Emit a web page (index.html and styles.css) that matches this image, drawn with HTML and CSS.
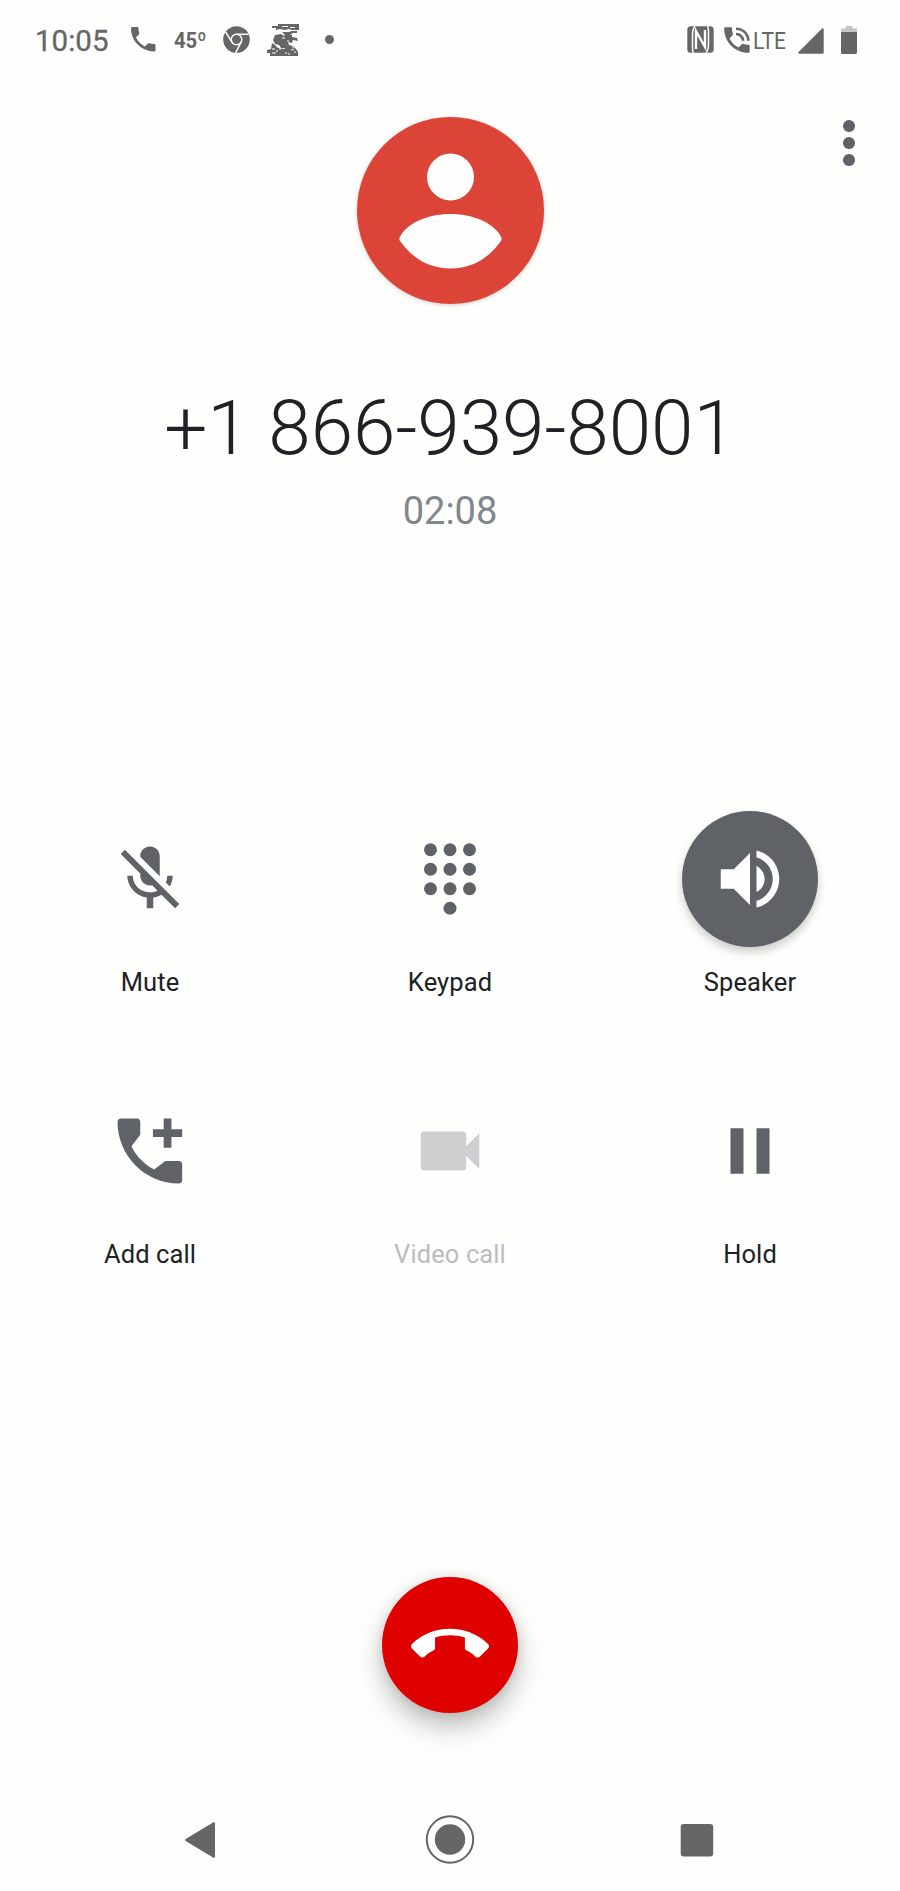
FILE: index.html
```html
<!DOCTYPE html>
<html lang="en">
<head>
<meta charset="UTF-8">
<title>Call</title>
<link rel="stylesheet" href="styles.css">
</head>
<body>
	<div class="phone">
		<header class="status">
			<span class="clock">10:05</span>
			<svg class="st-call" viewBox="3 3 18 18"><path d="M4 3h3.500c.55 0 1 .45 1 1 0 1.250.2 2.450.57 3.570.11.35.03.74-.25 1.020l-2.200 2.200c1.440 2.830 3.760 5.140 6.590 6.590l2.200-2.200c.28-.28.67-.36 1.020-.25 1.120.37 2.320.57 3.570.57.55 0 1 .45 1 1V20c0 .55-.45 1-1 1C10.610 21 3 13.390 3 4c0-.55.45-1 1-1z"/></svg>
			<svg class="temp" viewBox="0 0 36 26"><text x="1" y="20.500" textLength="32.500" lengthAdjust="spacingAndGlyphs">45º</text></svg>
			<svg class="st-chrome" viewBox="0 0 27 27">
				<circle cx="13.500" cy="13.500" r="13.300"/>
				<g class="cut"><circle cx="13.500" cy="13.500" r="5.300"/><path d="M13.500 8.200H25.500M8.900 16.200L2.600 6M18.100 16.200L12.500 27"/></g>
			</svg>
			<svg class="st-picture" viewBox="0 0 32 32">
				<path d="M11 0h21v6h-7l-3-1-4 1-5-1-4 1V4H5V2h6zM15 8h7l3-1h5v2h-4l-3 2h-5zM8 11l6-1 3 2 2-2 2 1h4v2l5 1 1 3-5-1-1 3-4-1 1 3-3 3h-5l-2-3-4-1-2-4zM5 19l3 2 3 3 6 1 3-2 2-2 4 1 3 3 2 3v4H3v-3H0v-3l4-1z"/>
				<path class="speck" d="M5 25h3M9 27h2M12 25h2M15 14h3M24 26l3-1M27 28h2M15 2.500h6M23 3.500h5M20 17h2M5 29h4M21 30h2M18 29h2M25 23h2"/>
			</svg>
			<span class="dot"></span>
			<svg class="st-nfc" viewBox="0 0 27 27">
				<rect x=".3" y=".3" width="26.400" height="26.400" rx="3.500"/>
				<path class="cut" d="M8 0C5.500 3 5.500 6 5.500 9V22q0 3 1 5M19 27c2.500-3 2.500-6 2.500-9V5q0-3-1-5"/>
				<path class="cut wide" d="M9 23V5L18 21V4"/>
			</svg>
			<svg class="st-wifi-call" viewBox="0 0 26 26">
				<path d="M1.500.3h5.200c.8 0 1.300.5 1.300 1.200 0 2 .3 3.700.9 5.200.2.600.1 1-.3 1.500L5.500 11.500c2.100 4 5 6.900 9 9l3.200-3.200c.4-.4.9-.5 1.500-.3 1.600.5 3.200.8 5 .8.900 0 1.500.5 1.500 1.400v5c0 .9-.5 1.500-1.500 1.500C11 25.700.2 15 .2 1.700c0-.9.5-1.400 1.300-1.400z"/>
				<path class="wave" d="M12 1.700c7 0 12.300 5.300 12.300 12M12 7c4.200 0 7 3 7 6.700"/>
			</svg>
			<svg class="lte" viewBox="0 0 40 34"><text x="3" y="25.500" textLength="33" lengthAdjust="spacingAndGlyphs">LTE</text></svg>
			<svg class="st-signal" viewBox="0 0 26 26"><path d="M24 .6c.8-.8 1.700-.4 1.700.700V24.500c0 .8-.5 1.200-1.200 1.200H1.300c-1.200 0-1.500-1-.7-1.700z"/></svg>
			<svg class="st-battery" viewBox="0 0 16 28"><path class="empty" d="M4.500 0h7v2.500H16V7H0V2.500h4.500z"/><path d="M0 6h16v20.500c0 .9-.6 1.500-1.500 1.500h-13C.6 28 0 27.400 0 26.500z"/></svg>
		</header>

		<div class="menu-row">
			<button class="menu" aria-label="More options"><i></i><i></i><i></i></button>
		</div>

		<section class="caller">
			<div class="avatar">
				<svg viewBox="0 0 187 187"><circle cx="93.500" cy="60" r="23.500"/><path d="M93.500 97C118 97 138 107 144.300 120.500q.8 1.800-.2 3.300C132 141 115 151.500 93.500 151.500S55 141 42.900 123.800q-1-1.500-.2-3.300C49 107 69 97 93.500 97z"/></svg>
			</div>
			<h1 class="number">+1 866-939-8001</h1>
			<p class="time">02:08</p>
		</section>

		<section class="actions">
			<button class="action">
				<span class="icon"><svg viewBox="0 0 24 24"><path d="M19 11h-1.700c0 .74-.16 1.430-.43 2.050l1.230 1.230c.56-.98.9-2.090.9-3.280zm-4.020.17c0-.06.020-.11.020-.17V5c0-1.660-1.340-3-3-3S9 3.340 9 5v.18l5.980 5.990zM4.270 3L3 4.270l6.010 6.010V11c0 1.660 1.330 3 2.990 3 .22 0 .44-.03.65-.08l1.660 1.660c-.71.33-1.500.52-2.310.52-2.760 0-5.300-2.100-5.300-5.100H5c0 3.410 2.720 6.230 6 6.720V21h2v-3.280c.91-.13 1.770-.45 2.540-.9L19.730 21 21 19.730 4.270 3z"/></svg></span>
				<span class="label">Mute</span>
			</button>
			<button class="action">
				<span class="icon"><svg viewBox="0 0 24 24"><circle cx="6" cy="3" r="2"/><circle cx="12" cy="3" r="2"/><circle cx="18" cy="3" r="2"/><circle cx="6" cy="9" r="2"/><circle cx="12" cy="9" r="2"/><circle cx="18" cy="9" r="2"/><circle cx="6" cy="15" r="2"/><circle cx="12" cy="15" r="2"/><circle cx="18" cy="15" r="2"/><circle cx="12" cy="21" r="2"/></svg></span>
				<span class="label">Keypad</span>
			</button>
			<button class="action active">
				<span class="icon"><svg viewBox="0 0 24 24"><path d="M3 9v6h4l5 5V4L7 9H3zm13.500 3c0-1.770-1.020-3.290-2.500-4.030v8.050c1.480-.73 2.500-2.250 2.500-4.020zM14 3.230v2.060c2.890.86 5 3.540 5 6.710s-2.110 5.850-5 6.710v2.060c4.010-.91 7-4.490 7-8.770s-2.990-7.860-7-8.770z"/></svg></span>
				<span class="label">Speaker</span>
			</button>
			<button class="action">
				<span class="icon"><svg viewBox="0 0 24 24"><path d="M3 2h5c.6 0 1 .4 1 1v4L6.300 10.500c1.500 3.100 3.900 5.600 7 7.200L16.700 15.100H20.900c.6 0 1 .4 1 1v4.900c0 .6-.4 1-1 1C10.500 22 2 13.500 2 3c0-.6.4-1 1-1zM16.200 2h2.400v3.300h3.300v2.400h-3.300V11h-2.400V7.700h-3.300V5.300h3.300z"/></svg></span>
				<span class="label">Add call</span>
			</button>
			<button class="action disabled">
				<span class="icon"><svg viewBox="0 0 24 24"><path d="M17 10.500V7c0-.55-.45-1-1-1H4c-.55 0-1 .45-1 1v10c0 .55.45 1 1 1h12c.55 0 1-.45 1-1v-3.500l4 4v-11l-4 4z"/></svg></span>
				<span class="label">Video call</span>
			</button>
			<button class="action">
				<span class="icon"><svg viewBox="0 0 24 24"><path d="M6 19h4V5H6v14zm8-14v14h4V5h-4z"/></svg></span>
				<span class="label">Hold</span>
			</button>
		</section>

		<button class="end-call" aria-label="End call">
			<svg viewBox="0 0 24 24"><path d="M12 9c-1.600 0-3.150.25-4.600.72v3.100c0 .39-.23.74-.56.9-.98.49-1.870 1.120-2.660 1.850-.18.18-.43.28-.7.28-.28 0-.53-.11-.71-.29L.29 13.080c-.18-.17-.29-.42-.29-.7 0-.28.11-.53.29-.71C3.340 8.780 7.460 7 12 7s8.660 1.780 11.710 4.670c.18.18.29.43.29.71 0 .28-.11.53-.29.71l-2.480 2.480c-.18.18-.43.29-.71.29-.27 0-.52-.11-.7-.28-.79-.74-1.690-1.360-2.670-1.850-.33-.16-.56-.5-.56-.9v-3.100C15.150 9.250 13.600 9 12 9z"/></svg>
		</button>

		<nav class="nav">
			<svg viewBox="0 0 50 50"><path d="M38 8.600v32.800c0 1.200-1 1.700-2 1L9 26.200c-1.100-.7-1.100-1.700 0-2.400L36 7.600c1-.7 2-.2 2 1z"/></svg>
			<svg viewBox="0 0 50 50"><circle class="ring" cx="25" cy="24.500" r="23.200"/><circle cx="25" cy="24.500" r="15.200"/></svg>
			<svg viewBox="0 0 50 50"><rect x="8.700" y="8.900" width="32.500" height="32.500" rx="3"/></svg>
		</nav>
	</div>
</body>
</html>
```
FILE: styles.css
```css
* {
	box-sizing: border-box;
}

body {
	margin: 0;
	background: #fefefd;
	font-family: Roboto, sans-serif;
	color: #202124;
}

svg {
	display: block;
	fill: currentColor;
	flex: none;
}

button {
	border: 0;
	padding: 0;
	background: none;
	font: inherit;
	color: inherit;
}

.phone {
	display: flex;
	flex-direction: column;
	width: 900px;
	height: 1891px;
	overflow: hidden;
}

/* status bar */
.status {
	display: flex;
	align-items: center;
	height: 79px;
	padding: 0 43px 0 35px;
	color: #666;
}

.clock {
	width: 96px;
	font-size: 29.5px;
	line-height: 34px;
	padding-top: 1px;
	height: 34px;
	white-space: nowrap;
	-webkit-text-stroke: 0.3px #666;
}

.st-call {
	width: 24.5px;
	height: 24.5px;
}

.temp {
	width: 36px;
	height: 26px;
	margin: 0 14px 0 17px;
	font-size: 22px;
	font-weight: 700;
}

.st-chrome {
	width: 27px;
	height: 27px;
}

.cut {
	fill: none;
	stroke: #fefefd;
	stroke-width: 1.5;
}

.st-picture {
	width: 32px;
	height: 32px;
	margin-left: 17px;
}

.speck {
	fill: none;
	stroke: #fefefd;
	stroke-width: 1;
}

.dot {
	width: 9px;
	height: 9px;
	margin: 0 auto 0 26px;
	border-radius: 50%;
	background: #666;
}

.st-nfc {
	width: 27px;
	height: 27px;
	margin-right: 10px;
}

.st-nfc .wide {
	stroke-width: 2.4;
}

.wave {
	fill: none;
	stroke: #666;
	stroke-width: 2.6;
}

.st-wifi-call {
	width: 26px;
	height: 26px;
}

.lte {
	width: 40px;
	height: 34px;
	margin: 0 8px 0 0;
	font-size: 24px;
}

.st-signal {
	width: 26px;
	height: 26px;
	margin: 2px 17px 0 0;
}

.st-battery {
	width: 16px;
	height: 28px;
}

.empty {
	fill: #c4c4c4;
}

/* caller */
.menu-row {
	display: flex;
	justify-content: flex-end;
	height: 38px;
	padding-right: 45px;
}

.menu {
	display: flex;
	flex-direction: column;
	gap: 5.5px;
	width: 12px;
	height: 47px;
	margin-top: 41px;
}

.menu i {
	width: 11.6px;
	height: 11.6px;
	border-radius: 50%;
	background: #5f6368;
}

.caller {
	display: flex;
	flex-direction: column;
	align-items: center;
}

.avatar {
	width: 187px;
	height: 187px;
	border-radius: 50%;
	background: #db4437;
	color: #fefefe;
	box-shadow: 0 1px 4px rgba(0, 0, 0, 0.2);
}

.number {
	margin: 79px 0 0;
	font-size: 76.4px;
	line-height: 90px;
	font-weight: 300;
	white-space: nowrap;
}

.time {
	margin: 16px 0 0;
	font-size: 38px;
	line-height: 44px;
	color: #80868b;
}

/* call buttons */
.actions {
	display: grid;
	grid-template-columns: repeat(3, 300px);
	grid-auto-rows: 272px;
	margin-top: 278px;
}

.action {
	display: flex;
	flex-direction: column;
	align-items: center;
}

.icon {
	display: flex;
	align-items: center;
	justify-content: center;
	width: 136px;
	height: 136px;
	border-radius: 50%;
	color: #5f6368;
}

.icon svg,
.end-call svg {
	width: 78px;
	height: 78px;
}

.label {
	margin-top: 20px;
	font-size: 25.5px;
	line-height: 30px;
	letter-spacing: 0.1px;
}

.active .icon {
	background: #5f6368;
	color: #fefefe;
	box-shadow: 0 5px 10px rgba(0, 0, 0, 0.2);
}

.disabled .icon {
	color: #cdcfd1;
}

.disabled .label {
	color: #bcbdbe;
}

.end-call {
	display: flex;
	align-items: center;
	justify-content: center;
	align-self: center;
	width: 136px;
	height: 136px;
	margin-top: 222px;
	border-radius: 50%;
	background: #df0000;
	color: #fff;
	box-shadow: 0 14px 26px rgba(0, 0, 0, 0.25), 0 0 12px rgba(0, 0, 0, 0.1);
}

/* system navigation */
.nav {
	display: flex;
	justify-content: space-between;
	margin-top: 102px;
	padding: 0 178px 0 177px;
	color: #666;
}

.nav svg {
	width: 50px;
	height: 50px;
}

.ring {
	fill: none;
	stroke: #666;
	stroke-width: 2;
}
```
